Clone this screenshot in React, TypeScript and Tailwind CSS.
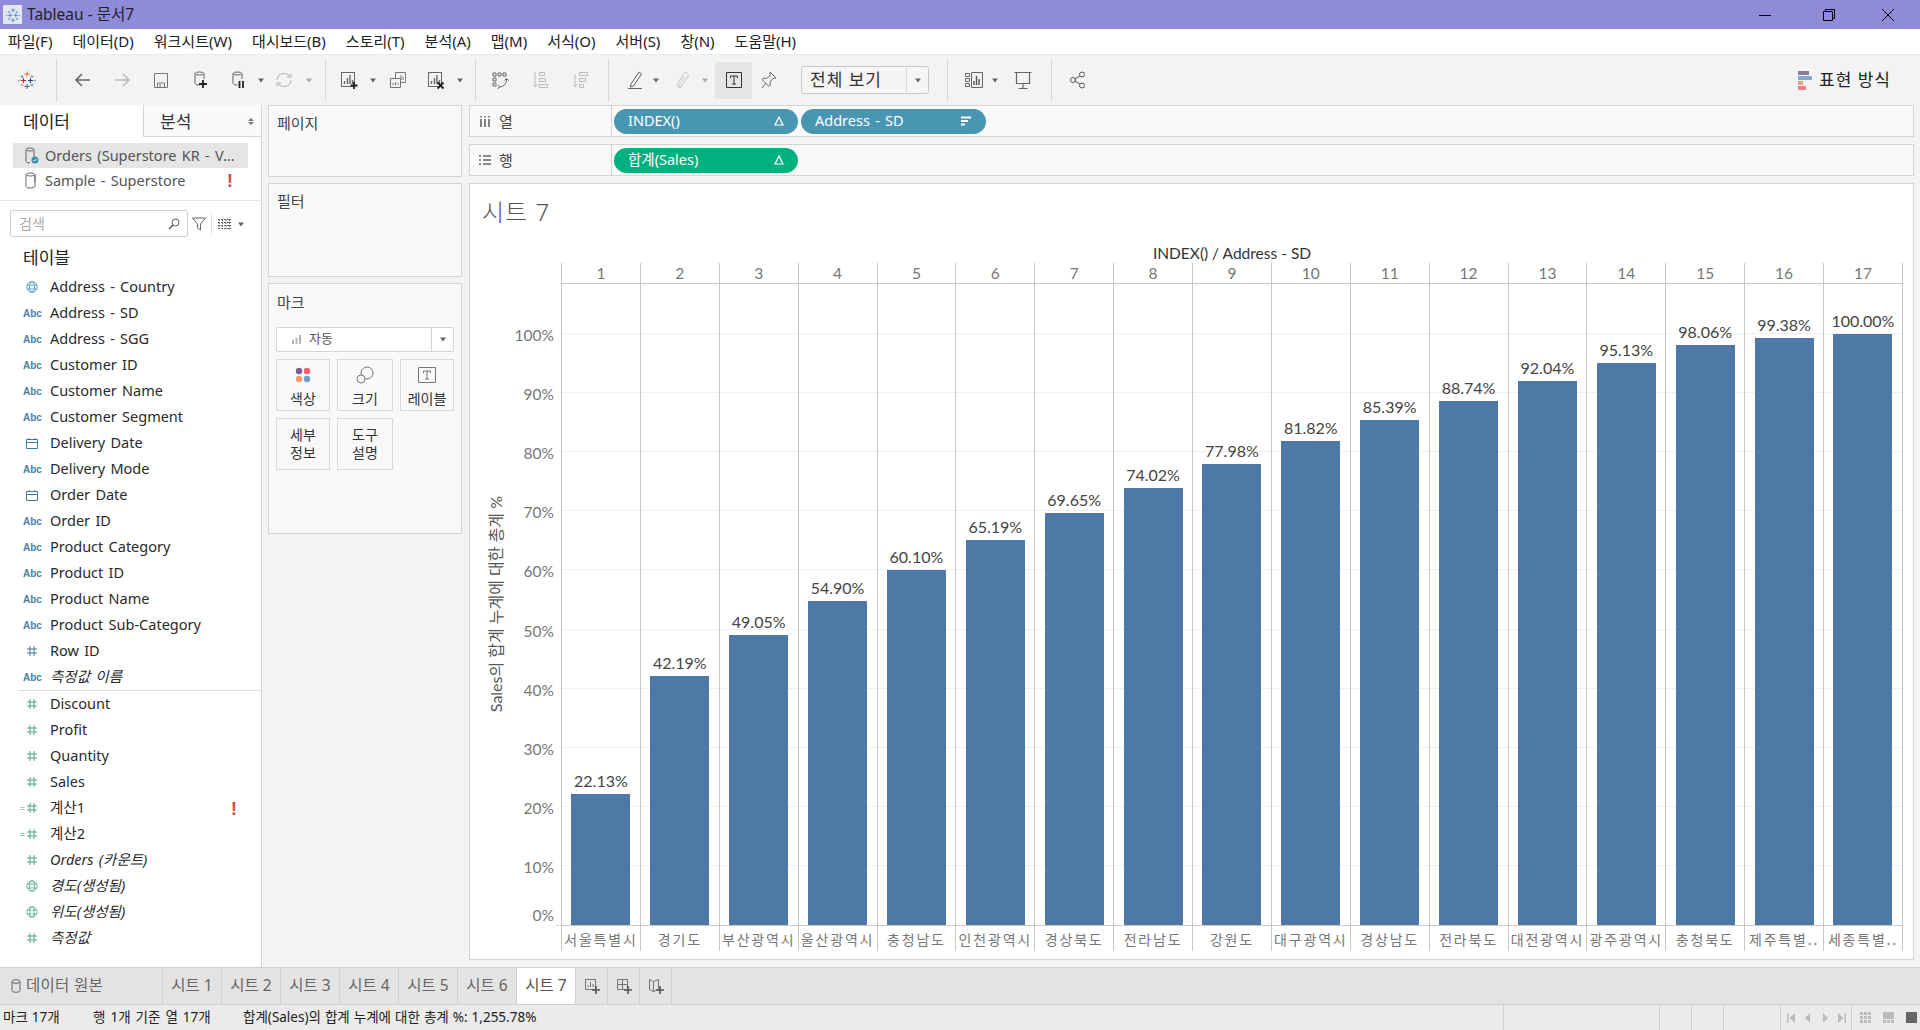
import type { ReactNode } from "react";

const menus = ["파일(F)", "데이터(D)", "워크시트(W)", "대시보드(B)", "스토리(T)", "분석(A)", "맵(M)", "서식(O)", "서버(S)", "창(N)", "도움말(H)"];

const dimensions = [
  { type: "globe", name: "Address - Country" },
  { type: "abc", name: "Address - SD" },
  { type: "abc", name: "Address - SGG" },
  { type: "abc", name: "Customer ID" },
  { type: "abc", name: "Customer Name" },
  { type: "abc", name: "Customer Segment" },
  { type: "date", name: "Delivery Date" },
  { type: "abc", name: "Delivery Mode" },
  { type: "date", name: "Order Date" },
  { type: "abc", name: "Order ID" },
  { type: "abc", name: "Product Category" },
  { type: "abc", name: "Product ID" },
  { type: "abc", name: "Product Name" },
  { type: "abc", name: "Product Sub-Category" },
  { type: "num", name: "Row ID" },
  { type: "abc", name: "측정값 이름", italic: true },
];

const measures = [
  { type: "num", name: "Discount" },
  { type: "num", name: "Profit" },
  { type: "num", name: "Quantity" },
  { type: "num", name: "Sales" },
  { type: "calc", name: "계산1", warn: true },
  { type: "calc", name: "계산2" },
  { type: "num", name: "Orders (카운트)", italic: true },
  { type: "globe", name: "경도(생성됨)", italic: true },
  { type: "globe", name: "위도(생성됨)", italic: true },
  { type: "num", name: "측정값", italic: true },
];

const bars = [
  { pct: 22.13, label: "서울특별시" },
  { pct: 42.19, label: "경기도" },
  { pct: 49.05, label: "부산광역시" },
  { pct: 54.9, label: "울산광역시" },
  { pct: 60.1, label: "충청남도" },
  { pct: 65.19, label: "인천광역시" },
  { pct: 69.65, label: "경상북도" },
  { pct: 74.02, label: "전라남도" },
  { pct: 77.98, label: "강원도" },
  { pct: 81.82, label: "대구광역시" },
  { pct: 85.39, label: "경상남도" },
  { pct: 88.74, label: "전라북도" },
  { pct: 92.04, label: "대전광역시" },
  { pct: 95.13, label: "광주광역시" },
  { pct: 98.06, label: "충청북도" },
  { pct: 99.38, label: "제주특별.." },
  { pct: 100, label: "세종특별.." },
];

const ticks = [0, 10, 20, 30, 40, 50, 60, 70, 80, 90, 100];
const PX_PER_PCT = 5.91;

const Svg = ({ className = "", children }: { className?: string; children: ReactNode }) => (
  <svg viewBox="0 0 20 20" fill="none" className={`w-5 h-5 shrink-0 ${className}`}>
    {children}
  </svg>
);

const Caret = ({ className = "", color = "#666" }: { className?: string; color?: string }) => (
  <svg viewBox="0 0 8 8" className={`w-2 h-2 shrink-0 ${className}`}>
    <path d="M1 2.5h6L4 6.5z" fill={color} />
  </svg>
);

const Divider = ({ className = "" }: { className?: string }) => <div className={`w-px h-[43px] bg-[#d8d8d8] shrink-0 ${className}`} />;

const Cross = ({ x, y, r, c, w = 1 }: { x: number; y: number; r: number; c: string; w?: number }) => (
  <path d={`M${x - r} ${y}H${x + r}M${x} ${y - r}V${y + r}`} stroke={c} strokeWidth={w} />
);

const Logo = ({ className = "", mono = false }: { className?: string; mono?: boolean }) => (
  <Svg className={className}>
    <Cross x={10} y={4} r={2.6} c={mono ? "#4a8db5" : "#e8762b"} w={1.1} />
    <Cross x={5} y={6.5} r={1.5} c={mono ? "#4a8db5" : "#59879b"} w={0.8} />
    <Cross x={15} y={6.5} r={1.5} c={mono ? "#4a8db5" : "#5b9aa0"} w={0.8} />
    <Cross x={6.5} y={10.5} r={2.6} c={mono ? "#4a8db5" : "#c72037"} w={1.1} />
    <Cross x={13.5} y={10.5} r={2.6} c={mono ? "#4a8db5" : "#1f447e"} w={1.1} />
    <Cross x={2} y={10.5} r={1} c={mono ? "#4a8db5" : "#7099a6"} w={0.7} />
    <Cross x={18} y={10.5} r={1} c={mono ? "#4a8db5" : "#7099a6"} w={0.7} />
    <Cross x={10} y={16.5} r={2.6} c={mono ? "#4a8db5" : "#5c6692"} w={1.1} />
    <Cross x={5} y={15} r={1.4} c={mono ? "#4a8db5" : "#eb912b"} w={0.8} />
    <Cross x={15} y={15} r={1.4} c={mono ? "#4a8db5" : "#59879b"} w={0.8} />
  </Svg>
);

const Cylinder = ({ x = 5, y = 2, w = 9, h = 13, c = "#666" }: { x?: number; y?: number; w?: number; h?: number; c?: string }) => (
  <g stroke={c} strokeWidth="1">
    <ellipse cx={x + w / 2} cy={y + 1.5} rx={w / 2} ry={1.5} />
    <path d={`M${x} ${y + 1.5}V${y + h - 1.5}Q${x} ${y + h} ${x + w / 2} ${y + h}M${x + w} ${y + 1.5}V${y + h - 6}`} />
  </g>
);

const BarsIcon = ({ c = "#666" }: { c?: string }) => (
  <g>
    <rect x="2.5" y="2.5" width="13" height="14" stroke={c} />
    <path d="M5.5 14v-3M8.5 14V8M11 14V5M13.5 14v-4" stroke={c} strokeWidth="1.4" />
  </g>
);

const Hash = ({ color }: { color: string }) => (
  <svg viewBox="0 0 12 12" className="w-3 h-3 shrink-0" fill="none" stroke={color}>
    <path d="M4 1v10M8 1v10M1 4h10M1 8h10" />
  </svg>
);

const Globe = ({ color }: { color: string }) => (
  <svg viewBox="0 0 12 12" className="w-3 h-3 mx-[3px] shrink-0" fill="none" stroke={color} strokeWidth="0.8">
    <circle cx="6" cy="6" r="5.2" />
    <ellipse cx="6" cy="6" rx="2.4" ry="5.2" />
    <path d="M1 4h10M1 8h10" />
  </svg>
);

const FieldIcon = ({ type, blue }: { type: string; blue?: boolean }) => {
  const color = blue ? "#3f7f9b" : "#4aa584";
  if (type === "abc") {
    return <span className="w-[18px] text-center text-[10px] font-bold text-[#4f7f99] [font-family:'Liberation_Sans',sans-serif]">Abc</span>;
  }
  if (type === "date") {
    return (
      <svg viewBox="0 0 12 12" className="w-3 h-3 mx-[3px] shrink-0" fill="none" stroke={color}>
        <path d="M.5 2.5h11v9H.5zM.5 5.5h11M3 1v2M9 1v2" />
      </svg>
    );
  }
  if (type === "globe") {
    return <Globe color={blue ? "#3f8fb0" : "#4fa98a"} />;
  }
  return (
    <span className="flex items-center justify-end w-[18px] pr-[3px]">
      {type === "calc" && <span className="text-[9px] leading-none text-[#4aa584] mr-px [font-family:'Liberation_Sans',sans-serif]">=</span>}
      <Hash color={color} />
    </span>
  );
};

const Warn = ({ className = "" }: { className?: string }) => (
  <span className={`text-[#c8504a] text-[19px] font-bold leading-none [font-family:'Liberation_Sans',sans-serif] ${className}`}>!</span>
);

const Field = ({ name, type, italic, warn, blue }: { name: string; type: string; italic?: boolean; warn?: boolean; blue?: boolean }) => (
  <div className="flex items-center h-[26px] pl-[23px] pr-[24px] shrink-0">
    <FieldIcon type={type} blue={blue} />
    <span className={`ml-[9px] text-[14.5px] [word-spacing:1.5px] text-[#2a2a2a] whitespace-nowrap ${italic ? "italic" : ""}`}>{name}</span>
    {warn && <Warn className="ml-auto" />}
  </div>
);

const Pill = ({ className = "", label, icon }: { className?: string; label: string; icon: ReactNode }) => (
  <div className={`flex items-center justify-between h-[25px] rounded-full pl-[14px] pr-[14px] text-white text-[14.5px] [word-spacing:1.5px] ${className}`}>
    <span>{label}</span>
    {icon}
  </div>
);

const Delta = () => (
  <svg viewBox="0 0 10 10" className="w-[10px] h-[10px]" fill="none" stroke="#fff" strokeWidth="1.2">
    <path d="M5 1L9 9H1z" />
  </svg>
);

const MarkButton = ({ className = "", children }: { className?: string; children: ReactNode }) => (
  <div className={`flex flex-col items-center h-[52px] border border-[#d9d9d9] text-[14px] leading-[18px] text-[#333] ${className}`}>{children}</div>
);

const SheetTab = ({ label, active }: { label: string; active?: boolean }) => (
  <div className={`flex items-center justify-center w-[59px] h-full border-r border-[#cfcfcf] text-[15.5px] ${active ? "bg-white text-[#555]" : "text-[#666]"}`}>{label}</div>
);

const App = () => {
  return (
    <div className="w-[1920px] h-[1030px] flex flex-col overflow-hidden bg-[#f3f3f3] text-[#333] [font-family:'Noto_Sans','Noto_Sans_CJK_KR',sans-serif]">
      {/* title bar */}
      <div className="flex items-center h-[29px] bg-[#8f8bd8] text-[#222] shrink-0">
        <div className="ml-[3px] w-[19px] h-[19px] bg-[#e4e6f4] flex items-center justify-center">
          <Logo mono className="!w-4 !h-4" />
        </div>
        <span className="ml-[5px] text-[15.5px]">Tableau - 문서7</span>
        <div className="ml-auto flex items-center text-black">
          <svg viewBox="0 0 12 12" className="w-3 h-3">
            <path d="M0 6.5h12" stroke="#000" />
          </svg>
          <svg viewBox="0 0 12 12" className="w-3 h-3 ml-[52px]" fill="none" stroke="#000">
            <path d="M.5 2.5h9v9h-9zM2.5 2.5v-2h9v9h-2" />
          </svg>
          <svg viewBox="0 0 12 12" className="w-3 h-3 ml-[47px] mr-[26px]" fill="none" stroke="#000">
            <path d="M0 0l12 12M12 0L0 12" />
          </svg>
        </div>
      </div>

      {/* menu */}
      <div className="flex items-center h-[25px] bg-white pl-[8px] gap-[20px] text-[15px] text-[#222] shrink-0">
        {menus.map((m) => (
          <span key={m}>{m}</span>
        ))}
      </div>

      {/* toolbar */}
      <div className="flex items-center h-[51px] border-t border-[#ececec] shrink-0">
        <Logo className="ml-[17px]" />
        <Divider className="ml-[19px]" />
        <Svg className="ml-[16px]">
          <path d="M17 10H3M9 4l-6 6 6 6" stroke="#666" strokeWidth="1.6" />
        </Svg>
        <Svg className="ml-[19px]">
          <path d="M3 10h14M11 4l6 6-6 6" stroke="#bbb" strokeWidth="1.6" />
        </Svg>
        <Svg className="ml-[19px]">
          <path d="M3.5 3.5h13v14h-13zM6.5 17v-4h7v4M9 14v3" stroke="#777" />
        </Svg>
        <Svg className="ml-[19px]">
          <Cylinder />
          <path d="M13 10v8M9 14h8" stroke="#222" strokeWidth="1.8" />
        </Svg>
        <Svg className="ml-[18px]">
          <Cylinder />
          <path d="M11.5 11v7M15 11v7" stroke="#222" strokeWidth="1.8" />
        </Svg>
        <Caret className="ml-[9px]" />
        <Svg className="ml-[9px]">
          <path d="M3 10a7 7 0 0 1 12-4.5l1.5 1.5M17 10a7 7 0 0 1-12 4.5L3.5 13" stroke="#c4c4c4" strokeWidth="1.3" />
          <path d="M17 3v4h-4M3 17v-4h4" stroke="#c4c4c4" strokeWidth="1.3" />
        </Svg>
        <Caret className="ml-[11px]" color="#aaa" />
        <Divider className="ml-[12px]" />
        <Svg className="ml-[13px]">
          <BarsIcon />
          <path d="M15 12v7M11.5 15.5h7" stroke="#222" strokeWidth="1.8" />
        </Svg>
        <Caret className="ml-[10px]" />
        <Svg className="ml-[11px]">
          <path d="M7.5 2.5h10v10h-10zM11 10V8M13 10V5M15 10V7" stroke="#777" />
          <path d="M2.5 8.5h10v9h-10zM5 15v-2M7.5 15v-3M10 15v-2" stroke="#777" fill="#f3f3f3" />
        </Svg>
        <Svg className="ml-[18px]">
          <BarsIcon />
          <path d="M11.5 12.5l6 6M17.5 12.5l-6 6" stroke="#222" strokeWidth="1.8" />
        </Svg>
        <Caret className="ml-[10px]" />
        <Divider className="ml-[11px]" />
        <Svg className="ml-[14px]">
          <path d="M3 3h3v3H3zM8 3h3v3H8zM13 3h3v3h-3zM3 8h3v3H3zM3 13h3v3H3z" stroke="#666" />
          <path d="M16.5 9a7 7 0 0 1-7 8M7.5 15l2 2-2 2M14.5 10.5l2-2 2 2" stroke="#666" />
        </Svg>
        <Svg className="ml-[20px]">
          <path d="M5 2v15M2.5 14l2.5 3 2.5-3" stroke="#bbb" />
          <path d="M9.5 2.5h5v3h-5zM9.5 8.5h6v3h-6zM9.5 14.5h8v3h-8z" stroke="#bbb" />
        </Svg>
        <Svg className="ml-[20px]">
          <path d="M5 4v13M2.5 14l2.5 3 2.5-3" stroke="#bbb" />
          <path d="M9.5 2.5h8v3h-8zM9.5 8.5h6v3h-6zM9.5 14.5h4v3h-4z" stroke="#bbb" />
        </Svg>
        <Divider className="ml-[18px]" />
        <Svg className="ml-[16px]">
          <path d="M6 14L14 2l2.5 2-8 12-3 1zM3 18.5h14" stroke="#666" />
        </Svg>
        <Caret className="ml-[7px]" />
        <Svg className="ml-[11px]">
          <path d="M6.5 14l6.5-10.5a2.4 2.4 0 0 1 4 2.6L10.5 16.5a1.3 1.3 0 0 1-2.2-1.4L14 6.5M6.5 14a2.2 2.2 0 0 0 3.800 2.300" stroke="#c4c4c4" />
        </Svg>
        <Caret className="ml-[10px]" color="#aaa" />
        <div className="ml-[6px] w-[37px] h-[37px] bg-[#e5e5e5] flex items-center justify-center">
          <Svg>
            <path d="M2.5 2.5h15v15h-15z" stroke="#333" />
            <path d="M6.5 8V6h7v2M10 6v8M8 14h4" stroke="#333" />
          </Svg>
        </div>
        <Svg className="ml-[7px]">
          <path d="M11 2l6 6-3 .5-3 3.5.5 3-2 1-6-6 1-2 3 .5 3.5-3zM7 13l-4 5" stroke="#666" />
        </Svg>
        <div className="ml-[22px] flex items-center w-[128px] h-[28px] border border-[#c8c8c8] rounded-[3px] bg-[#f5f5f5]">
          <span className="flex-1 pl-[8px] text-[17px] tracking-[1px] text-[#333]">전체 보기</span>
          <div className="flex items-center justify-center w-[22px] h-full border-l border-[#d8d8d8]">
            <Caret />
          </div>
        </div>
        <Divider className="ml-[18px]" />
        <Svg className="ml-[16px]">
          <path d="M1.5 3.5h4v3h-4zM1.5 8.5h4v3h-4zM1.5 13.5h4v3h-4zM7.5 2.5h11v15h-11z" stroke="#666" />
          <path d="M10 15v-4M12.5 15V6M15 15v-6" stroke="#555" strokeWidth="1.4" />
        </Svg>
        <Caret className="ml-[7px]" />
        <Svg className="ml-[14px]">
          <path d="M1.5 2.5h17M3.5 2.5v11h13v-11M10 13.5v5M5.5 18.5h9" stroke="#666" strokeWidth="1.2" />
        </Svg>
        <Divider className="ml-[18px]" />
        <Svg className="ml-[16px]">
          <circle cx="5" cy="10" r="2.5" stroke="#555" />
          <circle cx="14" cy="4.5" r="2.5" stroke="#555" />
          <circle cx="14" cy="15.5" r="2.5" stroke="#555" />
          <path d="M7 9l5-3.2M7 11l5 3.2" stroke="#555" />
        </Svg>
        <div className="ml-auto pr-[29px] flex items-center">
          <svg viewBox="0 0 14 19" className="w-[14px] h-[19px]">
            <rect x="0" y="0" width="11" height="4" fill="#8b79a0" />
            <rect x="0" y="5" width="14" height="4" fill="#86a8cf" />
            <rect x="0" y="10" width="5" height="4" fill="#eaa37f" />
            <rect x="0" y="15" width="8" height="4" fill="#f0808d" />
          </svg>
          <span className="ml-[7px] text-[17px] text-[#222] tracking-[1px]">표현 방식</span>
        </div>
      </div>

      {/* workspace */}
      <div className="flex h-[862px] shrink-0">
        {/* data pane */}
        <div className="w-[262px] shrink-0 bg-white border-r border-[#d4d4d4] flex flex-col">
          <div className="flex h-[32px] shrink-0 text-[17px]">
            <div className="w-[143px] flex items-center pl-[23px] pt-[2px] text-[#222]">데이터</div>
            <div className="flex-1 flex items-center pl-[16px] pt-[2px] bg-[#fafafa] border-l border-b border-[#d4d4d4] text-[#333]">
              분석
              <span className="ml-auto mr-[7px] flex flex-col gap-px">
                <span className="w-0 h-0 border-x-[3px] border-x-transparent border-b-[3px] border-b-[#777]" />
                <span className="w-0 h-0 border-x-[3px] border-x-transparent border-t-[3px] border-t-[#777]" />
              </span>
            </div>
          </div>
          <div className="pt-[6px] pb-[7px] border-b border-[#e6e6e6] shrink-0">
            <div className="flex items-center h-[25px] mx-[13px] bg-[#e5e5e5] pl-[12px] text-[14.5px] [word-spacing:1.5px] text-[#555]">
              <svg viewBox="0 0 14 18" className="w-[14px] h-[18px] shrink-0" fill="none">
                <Cylinder x={1} y={1} w={8} h={15} />
                <circle cx="10" cy="13" r="3.5" fill="#3f8fb0" />
                <path d="M8.5 13l1 1 2-2" stroke="#fff" />
              </svg>
              <span className="ml-[6px] whitespace-nowrap">Orders (Superstore KR - V...</span>
            </div>
            <div className="flex items-center h-[25px] mx-[13px] pl-[12px] text-[14.5px] [word-spacing:1.5px] text-[#555]">
              <svg viewBox="0 0 14 18" className="w-[14px] h-[18px] shrink-0" fill="none">
                <Cylinder x={1} y={1} w={9} h={15} />
                <path d="M10 3v11Q10 16 5.5 16" stroke="#666" />
              </svg>
              <span className="ml-[6px]">Sample - Superstore</span>
              <Warn className="ml-auto mr-[15px]" />
            </div>
          </div>
          <div className="flex items-center mt-[9px] h-[27px] shrink-0">
            <div className="ml-[10px] flex items-center w-[178px] h-[27px] border border-[#cfcfcf] rounded-[2px] pl-[8px] pr-[7px] text-[14px] text-[#aaa]">
              검색
              <svg viewBox="0 0 12 12" className="w-3 h-3 ml-auto" fill="none" stroke="#555">
                <circle cx="7.5" cy="4.5" r="3.5" />
                <path d="M5 7l-4 4" strokeWidth="1.4" />
              </svg>
            </div>
            <svg viewBox="0 0 14 14" className="w-[14px] h-[14px] ml-[4px]" fill="none" stroke="#666">
              <path d="M.5 1h13L8.5 7v6L5.5 11V7z" />
            </svg>
            <div className="ml-[5px] w-px h-[22px] bg-[#ddd]" />
            <svg viewBox="0 0 13 10" className="w-[13px] h-[10px] ml-[6px]" fill="none" stroke="#666">
              <path d="M0 .5h13M0 3.5h13M0 6.5h13M0 9.5h13M1 0v10M4.5 0v10M8 0v10M11.5 0v10" strokeDasharray="2 1" />
            </svg>
            <Caret className="ml-[6px]" />
          </div>
          <div className="mt-[8px] mb-[3px] h-[26px] pl-[23px] flex items-center text-[17px] text-[#222] shrink-0">테이블</div>
          {dimensions.map((f) => (
            <Field key={f.name} name={f.name} type={f.type} italic={f.italic} blue />
          ))}
          <div className="ml-[18px] h-px bg-[#dedede] shrink-0" />
          {measures.map((f) => (
            <Field key={f.name} name={f.name} type={f.type} italic={f.italic} warn={f.warn} />
          ))}
        </div>

        {/* cards */}
        <div className="w-[194px] ml-[6px] shrink-0 flex flex-col pb-[7px]">
          <div className="h-[72px] border border-[#d4d4d4] bg-[#f9f9f9] px-[8px] pt-[6px] text-[15px] text-[#444] shrink-0">페이지</div>
          <div className="mt-[6px] h-[94px] border border-[#d4d4d4] bg-[#f9f9f9] px-[8px] pt-[6px] text-[15px] text-[#444] shrink-0">필터</div>
          <div className="mt-[6px] h-[251px] border border-[#d4d4d4] bg-[#f9f9f9] px-[7px] pt-[7px] text-[15px] text-[#444] shrink-0">
            <div className="pl-px">마크</div>
            <div className="mt-[13px] flex items-center w-[178px] h-[25px] border border-[#d4d4d4] rounded-[2px] bg-white">
              <svg viewBox="0 0 10 10" className="w-[10px] h-[10px] ml-[14px]">
                <path d="M1 10V6h2v4zM4.5 10V4h2v6zM8 10V1h2v9z" fill="#b5b5b5" />
              </svg>
              <span className="ml-[8px] text-[13px] text-[#555]">자동</span>
              <div className="ml-auto w-[22px] h-full border-l border-[#d4d4d4] flex items-center justify-center">
                <Caret />
              </div>
            </div>
            <div className="mt-[7px] flex gap-[7px]">
              <MarkButton className="w-[54px] pt-[7px]">
                <svg viewBox="0 0 16 16" className="w-4 h-4 mb-[7px] shrink-0">
                  <circle cx="4" cy="4" r="3.2" fill="#7b5f92" />
                  <circle cx="12" cy="4" r="3.2" fill="#f0606e" />
                  <circle cx="4" cy="12" r="3.2" fill="#f0a066" />
                  <circle cx="12" cy="12" r="3.2" fill="#6f9fcf" />
                </svg>
                색상
              </MarkButton>
              <MarkButton className="w-[56px] pt-[6px]">
                <svg viewBox="0 0 18 18" className="w-[18px] h-[18px] mb-[6px] shrink-0" fill="none" stroke="#777">
                  <circle cx="11" cy="7" r="6" />
                  <circle cx="5" cy="13" r="4" fill="#f9f9f9" />
                </svg>
                크기
              </MarkButton>
              <MarkButton className="w-[54px] pt-[7px]">
                <svg viewBox="0 0 18 16" className="w-[18px] h-4 mb-[7px] shrink-0" fill="none" stroke="#777">
                  <path d="M.5.5h17v15H.5zM5.5 6V4h7v2M9 4v8M7 12h4" />
                </svg>
                레이블
              </MarkButton>
            </div>
            <div className="mt-[7px] flex gap-[7px]">
              <MarkButton className="w-[54px] justify-center">
                <span>세부</span>
                <span>정보</span>
              </MarkButton>
              <MarkButton className="w-[56px] justify-center">
                <span>도구</span>
                <span>설명</span>
              </MarkButton>
            </div>
          </div>
        </div>

        {/* shelves and view */}
        <div className="w-[1445px] ml-[7px] shrink-0 flex flex-col pb-[7px]">
          <div className="flex h-[32px] border border-[#d4d4d4] bg-[#f9f9f9] shrink-0">
            <div className="w-[142px] flex items-center border-r border-[#d4d4d4] pl-[9px] text-[15px] text-[#444]">
              <svg viewBox="0 0 12 12" className="w-3 h-3" fill="none" stroke="#666" strokeWidth="1.6">
                <path d="M2 4v8M6 4v8M10 4v8M2 1v1.5M6 1v1.5M10 1v1.5" />
              </svg>
              <span className="ml-[8px]">열</span>
            </div>
            <div className="flex items-center pl-[2px] gap-[3px]">
              <Pill className="w-[184px] bg-[#4996b2]" label="INDEX()" icon={<Delta />} />
              <Pill
                className="w-[185px] bg-[#4996b2]"
                label="Address - SD"
                icon={
                  <svg viewBox="0 0 12 12" className="w-3 h-3" fill="#fff">
                    <path d="M1 1.5h10v2H1zM1 5h7v2H1zM1 8.5h4v2H1z" />
                  </svg>
                }
              />
            </div>
          </div>
          <div className="mt-[7px] flex h-[32px] border border-[#d4d4d4] bg-[#f9f9f9] shrink-0">
            <div className="w-[142px] flex items-center border-r border-[#d4d4d4] pl-[9px] text-[15px] text-[#444]">
              <svg viewBox="0 0 12 12" className="w-3 h-3" fill="none" stroke="#666" strokeWidth="1.6">
                <path d="M0 2h2M4 2h8M0 6h2M4 6h8M0 10h2M4 10h8" />
              </svg>
              <span className="ml-[8px]">행</span>
            </div>
            <div className="flex items-center pl-[2px]">
              <Pill className="w-[184px] bg-[#00b180]" label="합계(Sales)" icon={<Delta />} />
            </div>
          </div>

          <div className="mt-[7px] flex-1 border border-[#d4d4d4] bg-white flex flex-col">
            <div className="pl-[12px] pt-[12px] h-[44px] text-[24px] leading-[32px] font-light text-[#555] tracking-[1px]">시트 7</div>
            <div className="mt-[16px] h-[19px] w-[1433px] pl-[91px] text-center text-[15.5px] leading-[19px] text-[#333] [font-family:'Lato','Noto_Sans_CJK_KR',sans-serif]">INDEX() / Address - SD</div>
            <div className="flex">
              {/* y axis */}
              <div className="w-[91px] shrink-0 pt-[21px]">
                <div className="relative h-[642px] [font-family:'Lato','Noto_Sans_CJK_KR',sans-serif]">
                  <div className="absolute left-[16px] bottom-[214px] text-[16px] leading-[20px] text-[#555] [writing-mode:vertical-rl] [text-orientation:sideways] rotate-180 whitespace-nowrap">
                    Sales의 합계 누계에 대한 총계 %
                  </div>
                  {ticks.map((t) => (
                    <span
                      key={t}
                      className="absolute right-[7px] text-[15.5px] leading-[20px] text-[#777]"
                      style={{ bottom: t === 0 ? 1 : t * PX_PER_PCT - 10 }}
                    >
                      {t}%
                    </span>
                  ))}
                </div>
              </div>
              {/* plot */}
              <div className="relative flex w-[1342px] border-r border-[#c8c8c8] [font-family:'Lato','Noto_Sans_CJK_KR',sans-serif]">
                <div className="absolute -left-[5px] w-[5px] h-px bg-[#d8d8d8] bottom-[25px]" />
                {ticks.slice(1).map((t) => (
                  <div key={t} className="absolute left-0 right-0 h-px bg-[#f0f0f0]" style={{ bottom: 26 + t * PX_PER_PCT }} />
                ))}
                {bars.map((b, i) => (
                  <div key={b.label} className="relative flex-1 flex flex-col border-l border-[#c8c8c8]">
                    <div className="h-[21px] border-b border-[#c8c8c8] text-center text-[15.5px] leading-[20px] text-[#777]">{i + 1}</div>
                    <div className="h-[642px] flex flex-col justify-end items-center border-b border-[#c8c8c8]">
                      <span className="h-[20px] mb-[3px] text-[16px] leading-[20px] text-[#444] whitespace-nowrap">{b.pct.toFixed(2)}%</span>
                      <div className="w-[59px] bg-[#4e79a7]" style={{ height: b.pct * PX_PER_PCT }} />
                    </div>
                    <div className="h-[25px] text-center text-[14px] leading-[27px] text-[#777] tracking-[1.8px] whitespace-nowrap overflow-hidden [font-family:'Noto_Sans_CJK_KR',sans-serif]">{b.label}</div>
                  </div>
                ))}
              </div>
            </div>
          </div>
        </div>
      </div>

      {/* sheet tabs */}
      <div className="flex h-[37px] bg-[#e3e3e3] border-t border-[#cfcfcf] shrink-0">
        <div className="flex items-center w-[163px] border-r border-[#cfcfcf] pl-[11px] text-[15.5px] text-[#666]">
          <svg viewBox="0 0 10 14" className="w-[10px] h-[14px]" fill="none" stroke="#666">
            <ellipse cx="5" cy="2.5" rx="4" ry="1.8" />
            <path d="M1 2.5v9q0 1.8 4 1.8t4-1.8v-9" />
          </svg>
          <span className="ml-[5px] tracking-[0.3px]">데이터 원본</span>
        </div>
        {[1, 2, 3, 4, 5, 6].map((n) => (
          <SheetTab key={n} label={`시트 ${n}`} />
        ))}
        <SheetTab label="시트 7" active />
        <div className="flex items-center justify-center w-[32px] border-r border-[#cfcfcf]">
          <svg viewBox="0 0 16 16" className="w-4 h-4" fill="none">
            <path d="M1.5 1.5h10v10h-10zM4 9V7M6.5 9V4M9 9V6" stroke="#777" />
            <path d="M12 8v8M8 12h8" stroke="#555" strokeWidth="1.6" />
          </svg>
        </div>
        <div className="flex items-center justify-center w-[32px] border-r border-[#cfcfcf]">
          <svg viewBox="0 0 16 16" className="w-4 h-4" fill="none">
            <path d="M1.5 1.5h10v10h-10zM1.5 6.5h10M6.5 1.5v10" stroke="#777" />
            <path d="M12 8v8M8 12h8" stroke="#555" strokeWidth="1.6" />
          </svg>
        </div>
        <div className="flex items-center justify-center w-[32px] border-r border-[#cfcfcf]">
          <svg viewBox="0 0 16 16" className="w-4 h-4" fill="none">
            <path d="M1.5 1.5l4 2 5-2v10l-5 2-4-2zM5.5 3.5v10" stroke="#777" />
            <path d="M12 8v8M8 12h8" stroke="#555" strokeWidth="1.6" />
          </svg>
        </div>
      </div>

      {/* status bar */}
      <div className="flex items-center h-[26px] flex-1 bg-[#ebebeb] border-t border-[#d0d0d0] text-[13.5px] [word-spacing:0.5px] text-[#222]">
        <span className="ml-[3px] w-[90px]">마크 17개</span>
        <span className="w-[150px] [word-spacing:1.5px]">행 1개 기준 열 17개</span>
        <span>합계(Sales)의 합계 누계에 대한 총계 %: 1,255.78%</span>
        <div className="ml-auto flex h-full text-[#bbb]">
          <div className="w-[156px] border-l border-[#d0d0d0]" />
          <div className="w-[32px] border-l border-[#d0d0d0]" />
          <div className="w-[32px] border-l border-[#d0d0d0]" />
          <div className="w-[57px] border-l border-[#d0d0d0]" />
          <div className="w-[71px] border-l border-[#d0d0d0] flex items-center justify-center gap-[9px]">
            <svg viewBox="0 0 8 10" className="w-2 h-[10px]" fill="#bbb">
              <path d="M0 0h1.5v10H0zM8 0v10L2.5 5z" />
            </svg>
            <svg viewBox="0 0 8 10" className="w-2 h-[10px]" fill="#bbb">
              <path d="M6 0v10L1 5z" />
            </svg>
            <svg viewBox="0 0 8 10" className="w-2 h-[10px]" fill="#bbb">
              <path d="M2 0v10l5-5z" />
            </svg>
            <svg viewBox="0 0 8 10" className="w-2 h-[10px]" fill="#bbb">
              <path d="M8 0H6.5v10H8zM0 0v10l5.5-5z" />
            </svg>
          </div>
          <div className="w-[69px] border-l border-[#d0d0d0] flex items-center pl-[8px] gap-[12px] pr-[1px]">
            <svg viewBox="0 0 11 11" className="w-[11px] h-[11px]" fill="#bbb">
              <path d="M0 0h3v3H0zM4 0h3v3H4zM8 0h3v3H8zM0 4h3v3H0zM4 4h3v3H4zM8 4h3v3H8zM0 8h3v3H0zM4 8h3v3H4zM8 8h3v3H8z" />
            </svg>
            <svg viewBox="0 0 11 11" className="w-[11px] h-[11px]" fill="#bbb">
              <path d="M0 0h11v7H0zM0 8h3v3H0zM4 8h3v3H4zM8 8h3v3H8z" />
            </svg>
            <div className="w-[11px] h-[11px] bg-[#666]" />
          </div>
        </div>
      </div>
    </div>
  );
};

export default App;
